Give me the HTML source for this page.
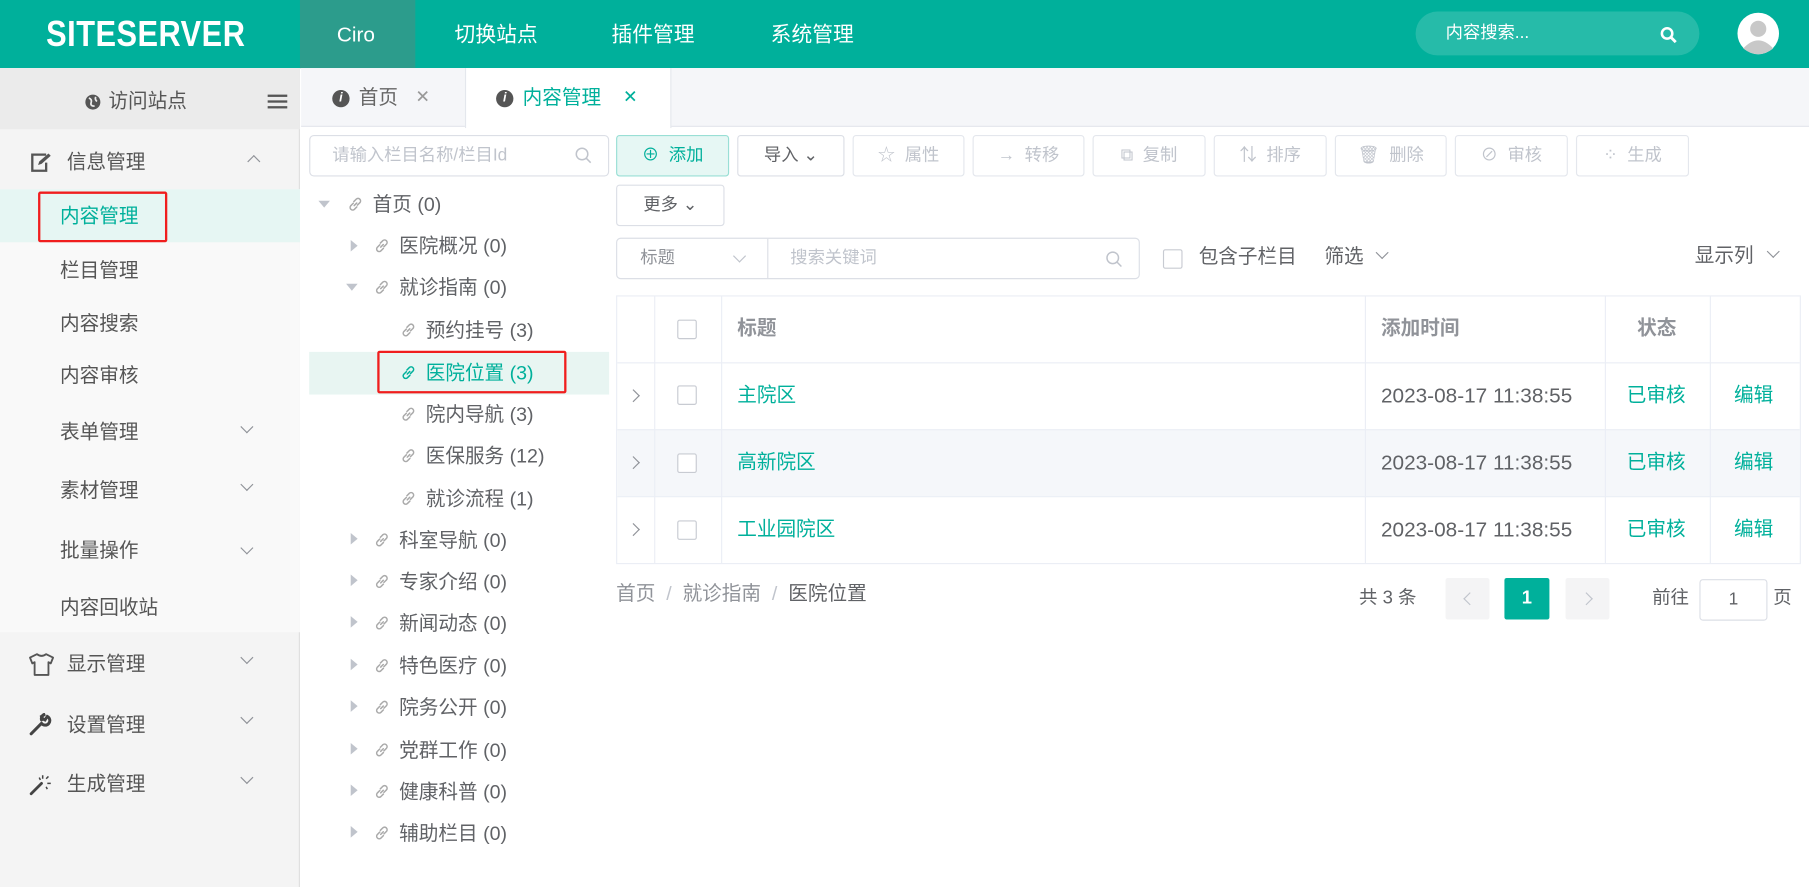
<!DOCTYPE html>
<html><head><meta charset="utf-8"><style>
*{box-sizing:border-box;margin:0;padding:0}
html,body{width:1809px;height:887px;overflow:hidden;background:#fff}
#w{position:absolute;left:0;top:0;width:1568px;height:769px;transform:scale(1.15370);transform-origin:0 0;font-family:"Liberation Sans","Noto Sans CJK SC",sans-serif;color:#606266;font-size:17px}
.a{position:absolute;white-space:nowrap;line-height:22px}
.hd{left:0;top:0;width:1568px;height:59px;background:#00b09b}
.side{left:0;top:59px;width:260px;height:710px;background:#f4f4f4;border-right:1px solid #e0e0e0}
.btn{position:absolute;top:117px;height:36px;border:1px solid #e4e7ed;border-radius:3px;color:#c0c4cc;font-size:15px;line-height:34px;text-align:center;background:#fff}
.tr{font-size:17px;color:#606266}
.tr svg{vertical-align:-1px;margin-right:8px;margin-left:1px}
.arr{position:absolute;width:0;height:0;border-top:5px solid transparent;border-bottom:5px solid transparent;border-left:6px solid #c0c4cc}
.chev{position:absolute;width:8px;height:8px;border-right:1.3px solid #909399;border-bottom:1.3px solid #909399;transform:rotate(45deg)}
.cb{position:absolute;width:17px;height:17px;border:1px solid #c8cbd2;border-radius:2px;background:#fff}
</style></head><body><div id="w">
<svg width="0" height="0" style="position:absolute"><defs><symbol id="lk" viewBox="0 0 14 14"><path d="M6 8.2l2.2-2.2M5.2 6.2L3 8.4a2.2 2.2 0 003.1 3.1l2.2-2.2M8.8 7.8L11 5.6A2.2 2.2 0 007.9 2.5L5.7 4.7" fill="none" stroke="currentColor" stroke-width="1.3" stroke-linecap="round"/></symbol></defs></svg>
<div class="a hd"></div>
<div class="a" style="left:40px;top:14px;color:#fff;font-size:31px;line-height:32px;font-weight:bold;transform:scaleX(.86);transform-origin:0 0;letter-spacing:0.5px">SITESERVER</div>
<div class="a" style="left:260px;top:0;width:100px;height:59px;background:#2c9c8c"></div>
<div class="a" style="left:292px;top:19px;color:#fff;font-size:18px">Ciro</div>
<div class="a" style="left:394px;top:19px;color:#fff;font-size:18px">切换站点</div>
<div class="a" style="left:530px;top:19px;color:#fff;font-size:18px">插件管理</div>
<div class="a" style="left:668px;top:19px;color:#fff;font-size:18px">系统管理</div>
<div class="a" style="left:1227px;top:10px;width:246px;height:38px;border-radius:19px;background:rgba(255,255,255,.15)"></div>
<div class="a" style="left:1253px;top:18px;color:#fff;font-size:15px">内容搜索...</div>
<svg class="a" style="left:1439px;top:23px" width="15" height="15" viewBox="0 0 15 15"><circle cx="6" cy="6" r="4.5" fill="none" stroke="#fff" stroke-width="2.2"/><line x1="9.5" y1="9.5" x2="13.5" y2="13.5" stroke="#fff" stroke-width="2.5"/></svg>
<svg class="a" style="left:1505px;top:10px" width="38" height="38" viewBox="0 0 38 38"><circle cx="19" cy="19" r="18" fill="#fff"/><circle cx="19" cy="15" r="7" fill="#c8c8c8"/><path d="M6 32 Q19 18 32 32 Q19 42 6 32Z" fill="#c8c8c8"/></svg>

<div class="a side"></div>
<div class="a" style="left:0;top:59px;width:260px;height:53px;background:#ebebeb"></div>
<svg class="a" style="left:73px;top:81px" width="15" height="15" viewBox="0 0 15 15"><circle cx="7.5" cy="7.5" r="6.5" fill="#555"/><path d="M4 4q3 1 2 4t3 3M10 3q-1 2 1 4" fill="none" stroke="#ebebeb" stroke-width="1.5"/></svg>
<div class="a" style="left:94px;top:77px;font-size:17px;color:#555">访问站点</div>
<div class="a" style="left:232px;top:82px;width:17px;height:2px;background:#555;box-shadow:0 5px 0 #555,0 10px 0 #555"></div>
<div class="a" style="left:0;top:164px;width:260px;height:384px;background:#f9f9f9"></div>
<svg class="a" style="left:26px;top:132px" width="18" height="18" viewBox="0 0 18 18"><path d="M14 2H2v14h12V9" fill="none" stroke="#555" stroke-width="2"/><path d="M7 11l1-3 8-7 2 2-8 7z" fill="#555"/></svg>
<div class="a" style="left:58px;top:130px;color:#555">信息管理</div>
<div class="chev" style="left:216px;top:136px;transform:rotate(225deg)"></div>
<div class="a" style="left:0;top:164px;width:260px;height:46px;background:#e6f6f3"></div>
<div class="a" style="left:52px;top:177px;color:#00b09b">内容管理</div>
<div class="a" style="left:33px;top:166px;width:112px;height:44px;border:2px solid #f01e1e;border-radius:2px"></div>
<div class="a" style="left:52px;top:224px;color:#555">栏目管理</div>
<div class="a" style="left:52px;top:270px;color:#555">内容搜索</div>
<div class="a" style="left:52px;top:315px;color:#555">内容审核</div>
<div class="a" style="left:52px;top:364px;color:#555">表单管理</div><div class="chev" style="left:210px;top:366px"></div>
<div class="a" style="left:52px;top:415px;color:#555">素材管理</div><div class="chev" style="left:210px;top:416px"></div>
<div class="a" style="left:52px;top:467px;color:#555">批量操作</div><div class="chev" style="left:210px;top:471px"></div>
<div class="a" style="left:52px;top:516px;color:#555">内容回收站</div>
<svg class="a" style="left:25px;top:566px" width="22" height="20" viewBox="0 0 22 20"><path d="M7 1L1 4l2 5 2-1v11h12V8l2 1 2-5-6-3q-4 3-8 0z" fill="none" stroke="#555" stroke-width="1.6" stroke-linejoin="round"/></svg>
<div class="a" style="left:58px;top:565px;color:#555">显示管理</div><div class="chev" style="left:210px;top:566px"></div>
<svg class="a" style="left:25px;top:618px" width="20" height="20" viewBox="0 0 20 20"><path d="M2 18l9-9M11 9a4 4 0 105-6l-2 3-2-1-1-2 3-2a4 4 0 00-3 5" fill="none" stroke="#444" stroke-width="2.6" stroke-linecap="round"/></svg>
<div class="a" style="left:58px;top:618px;color:#555">设置管理</div><div class="chev" style="left:210px;top:618px"></div>
<svg class="a" style="left:25px;top:670px" width="22" height="20" viewBox="0 0 22 20"><path d="M2 18l9-9" stroke="#444" stroke-width="2.4" stroke-linecap="round"/><path d="M12 2v3M15 5l2-2M16 9h3M9 4l1 2M15 12l1 2" stroke="#444" stroke-width="1.3"/></svg>
<div class="a" style="left:58px;top:669px;color:#555">生成管理</div><div class="chev" style="left:210px;top:670px"></div>

<div class="a" style="left:261px;top:59px;width:1307px;height:51px;background:#f5f6f9;border-bottom:1px solid #e4e7ed"></div>
<div class="a" style="left:403px;top:59px;width:179px;height:52px;background:#fff;border-left:1px solid #e4e7ed;border-right:1px solid #e4e7ed"></div>
<div class="a" style="left:288px;top:78px;width:15px;height:15px;border-radius:50%;background:#555;color:#fff;font-size:11px;font-style:italic;font-weight:bold;text-align:center;line-height:15px">i</div>
<div class="a" style="left:311px;top:74px;color:#666">首页</div>
<div class="a" style="left:360px;top:74px;color:#999;font-size:15px">✕</div>
<div class="a" style="left:430px;top:78px;width:15px;height:15px;border-radius:50%;background:#555;color:#fff;font-size:11px;font-style:italic;font-weight:bold;text-align:center;line-height:15px">i</div>
<div class="a" style="left:453px;top:74px;color:#00b09b">内容管理</div>
<div class="a" style="left:540px;top:74px;color:#00b09b;font-size:15px">✕</div>

<div class="a" style="left:268px;top:117px;width:260px;height:36px;border:1px solid #dcdfe6;border-radius:4px"></div>
<div class="a" style="left:288px;top:124px;color:#c0c4cc;font-size:15px">请输入栏目名称/栏目Id</div>
<svg class="a" style="left:498px;top:127px" width="15" height="15"><circle cx="6.5" cy="6.5" r="5" fill="none" stroke="#c0c4cc" stroke-width="1.3"/><line x1="10" y1="10" x2="14" y2="14" stroke="#c0c4cc" stroke-width="1.3"/></svg>
<div class="a" style="left:268px;top:305px;width:260px;height:37px;background:#e8f5f2"></div>
<div class="a" style="left:327px;top:304px;width:164px;height:37px;border:2px solid #f01e1e;border-radius:2px"></div>
<div class="arr" style="left:278px;top:172px;transform:rotate(90deg)"></div>
<div class="arr" style="left:304px;top:208px"></div>
<div class="arr" style="left:302px;top:244px;transform:rotate(90deg)"></div>
<div class="arr" style="left:304px;top:462px"></div><div class="arr" style="left:304px;top:498px"></div><div class="arr" style="left:304px;top:534px"></div><div class="arr" style="left:304px;top:571px"></div><div class="arr" style="left:304px;top:607px"></div><div class="arr" style="left:304px;top:644px"></div><div class="arr" style="left:304px;top:680px"></div><div class="arr" style="left:304px;top:716px"></div>
<div class="a tr" style="left:300px;top:167px"><svg width="14" height="14" style="color:#aaa"><use href="#lk"/></svg>首页 (0)</div>
<div class="a tr" style="left:323px;top:203px"><svg width="14" height="14" style="color:#aaa"><use href="#lk"/></svg>医院概况 (0)</div>
<div class="a tr" style="left:323px;top:239px"><svg width="14" height="14" style="color:#aaa"><use href="#lk"/></svg>就诊指南 (0)</div>
<div class="a tr" style="left:346px;top:276px"><svg width="14" height="14" style="color:#aaa"><use href="#lk"/></svg>预约挂号 (3)</div>
<div class="a tr" style="left:346px;top:313px;color:#00b09b"><svg width="14" height="14" style="color:#00b09b"><use href="#lk"/></svg>医院位置 (3)</div>
<div class="a tr" style="left:346px;top:349px"><svg width="14" height="14" style="color:#aaa"><use href="#lk"/></svg>院内导航 (3)</div>
<div class="a tr" style="left:346px;top:385px"><svg width="14" height="14" style="color:#aaa"><use href="#lk"/></svg>医保服务 (12)</div>
<div class="a tr" style="left:346px;top:422px"><svg width="14" height="14" style="color:#aaa"><use href="#lk"/></svg>就诊流程 (1)</div>
<div class="a tr" style="left:323px;top:458px"><svg width="14" height="14" style="color:#aaa"><use href="#lk"/></svg>科室导航 (0)</div>
<div class="a tr" style="left:323px;top:494px"><svg width="14" height="14" style="color:#aaa"><use href="#lk"/></svg>专家介绍 (0)</div>
<div class="a tr" style="left:323px;top:530px"><svg width="14" height="14" style="color:#aaa"><use href="#lk"/></svg>新闻动态 (0)</div>
<div class="a tr" style="left:323px;top:567px"><svg width="14" height="14" style="color:#aaa"><use href="#lk"/></svg>特色医疗 (0)</div>
<div class="a tr" style="left:323px;top:603px"><svg width="14" height="14" style="color:#aaa"><use href="#lk"/></svg>院务公开 (0)</div>
<div class="a tr" style="left:323px;top:640px"><svg width="14" height="14" style="color:#aaa"><use href="#lk"/></svg>党群工作 (0)</div>
<div class="a tr" style="left:323px;top:676px"><svg width="14" height="14" style="color:#aaa"><use href="#lk"/></svg>健康科普 (0)</div>
<div class="a tr" style="left:323px;top:712px"><svg width="14" height="14" style="color:#aaa"><use href="#lk"/></svg>辅助栏目 (0)</div>

<div class="btn" style="left:534px;width:98px;background:#e6f7f4;border-color:#99dfd5;color:#00b09b">⊕ &nbsp;添加</div>
<div class="btn" style="left:639px;width:93px;color:#606266;border-color:#dcdfe6">导入 ⌄</div>
<div class="btn" style="left:739px;width:97px">☆ &nbsp;属性</div>
<div class="btn" style="left:843px;width:97px">→ &nbsp;转移</div>
<div class="btn" style="left:947px;width:98px">⧉ &nbsp;复制</div>
<div class="btn" style="left:1052px;width:98px">⇅ &nbsp;排序</div>
<div class="btn" style="left:1157px;width:97px">🗑︎ &nbsp;删除</div>
<div class="btn" style="left:1261px;width:98px">⊘ &nbsp;审核</div>
<div class="btn" style="left:1366px;width:98px">⁘ &nbsp;生成</div>
<div class="btn" style="left:534px;top:160px;width:94px;color:#606266;border-color:#dcdfe6">更多 ⌄</div>

<div class="a" style="left:534px;top:206px;width:454px;height:36px;border:1px solid #dcdfe6;border-radius:4px"></div>
<div class="a" style="left:665px;top:207px;width:1px;height:34px;background:#dcdfe6"></div>
<div class="a" style="left:555px;top:213px;color:#909399;font-size:15px">标题</div>
<div class="chev" style="left:637px;top:218px;border-color:#c0c4cc"></div>
<div class="a" style="left:685px;top:213px;color:#c0c4cc;font-size:15px">搜索关键词</div>
<svg class="a" style="left:958px;top:217px" width="15" height="15"><circle cx="6.5" cy="6.5" r="5" fill="none" stroke="#c0c4cc" stroke-width="1.3"/><line x1="10" y1="10" x2="14" y2="14" stroke="#c0c4cc" stroke-width="1.3"/></svg>
<div class="cb" style="left:1008px;top:216px"></div>
<div class="a" style="left:1039px;top:212px">包含子栏目</div>
<div class="a" style="left:1148px;top:212px">筛选</div><div class="chev" style="left:1194px;top:215px"></div>
<div class="a" style="left:1469px;top:211px">显示列</div><div class="chev" style="left:1533px;top:214px"></div>

<div class="a" style="left:534px;top:256px;width:1027px;height:233px;border:1px solid #ebeef5"></div>
<div class="a" style="left:535px;top:372px;width:1025px;height:58px;background:#f5f7fa"></div>
<div class="a" style="left:535px;top:314px;width:1025px;height:1px;background:#ebeef5"></div>
<div class="a" style="left:535px;top:372px;width:1025px;height:1px;background:#ebeef5"></div>
<div class="a" style="left:535px;top:430px;width:1025px;height:1px;background:#ebeef5"></div>
<div class="a" style="left:567px;top:257px;width:1px;height:231px;background:#ebeef5"></div>
<div class="a" style="left:625px;top:257px;width:1px;height:231px;background:#ebeef5"></div>
<div class="a" style="left:1183px;top:257px;width:1px;height:231px;background:#ebeef5"></div>
<div class="a" style="left:1391px;top:257px;width:1px;height:231px;background:#ebeef5"></div>
<div class="a" style="left:1482px;top:257px;width:1px;height:231px;background:#ebeef5"></div>
<div class="cb" style="left:587px;top:277px"></div>
<div class="a" style="left:639px;top:274px;font-weight:bold;color:#909399">标题</div>
<div class="a" style="left:1197px;top:274px;font-weight:bold;color:#909399">添加时间</div>
<div class="a" style="left:1419px;top:274px;font-weight:bold;color:#909399">状态</div>
<div class="chev" style="left:545px;top:339px;transform:rotate(-45deg)"></div>
<div class="chev" style="left:545px;top:397px;transform:rotate(-45deg)"></div>
<div class="chev" style="left:545px;top:455px;transform:rotate(-45deg)"></div>
<div class="cb" style="left:587px;top:334px"></div><div class="cb" style="left:587px;top:393px"></div><div class="cb" style="left:587px;top:451px"></div>
<div class="a" style="left:639px;top:332px;color:#00b09b">主院区</div>
<div class="a" style="left:639px;top:390px;color:#00b09b">高新院区</div>
<div class="a" style="left:639px;top:448px;color:#00b09b">工业园院区</div>
<div class="a" style="left:1197px;top:332px;font-size:18px">2023-08-17 11:38:55</div>
<div class="a" style="left:1197px;top:390px;font-size:18px">2023-08-17 11:38:55</div>
<div class="a" style="left:1197px;top:448px;font-size:18px">2023-08-17 11:38:55</div>
<div class="a" style="left:1410px;top:332px;color:#00b09b">已审核</div><div class="a" style="left:1503px;top:332px;color:#00b09b">编辑</div>
<div class="a" style="left:1410px;top:390px;color:#00b09b">已审核</div><div class="a" style="left:1503px;top:390px;color:#00b09b">编辑</div>
<div class="a" style="left:1410px;top:448px;color:#00b09b">已审核</div><div class="a" style="left:1503px;top:448px;color:#00b09b">编辑</div>

<div class="a" style="left:534px;top:504px;color:#909399">首页 &nbsp;<span style="color:#c0c4cc">/</span>&nbsp; 就诊指南 &nbsp;<span style="color:#c0c4cc">/</span>&nbsp; <span style="color:#606266">医院位置</span></div>
<div class="a" style="left:1178px;top:508px;font-size:16px">共 3 条</div>
<div class="a" style="left:1253px;top:501px;width:38px;height:36px;background:#f4f4f5;border-radius:2px"></div>
<div class="chev" style="left:1270px;top:515px;transform:rotate(135deg);border-color:#c0c4cc"></div>
<div class="a" style="left:1304px;top:501px;width:39px;height:36px;background:#00b09b;border-radius:2px;color:#fff;font-weight:bold;text-align:center;line-height:36px;font-size:16px">1</div>
<div class="a" style="left:1357px;top:501px;width:38px;height:36px;background:#f4f4f5;border-radius:2px"></div>
<div class="chev" style="left:1371px;top:515px;transform:rotate(-45deg);border-color:#c0c4cc"></div>
<div class="a" style="left:1432px;top:508px;font-size:16px">前往</div>
<div class="a" style="left:1473px;top:502px;width:59px;height:36px;border:1px solid #dcdfe6;border-radius:3px;text-align:center;line-height:34px;font-size:15px">1</div>
<div class="a" style="left:1537px;top:508px;font-size:16px">页</div>
</div></body></html>
